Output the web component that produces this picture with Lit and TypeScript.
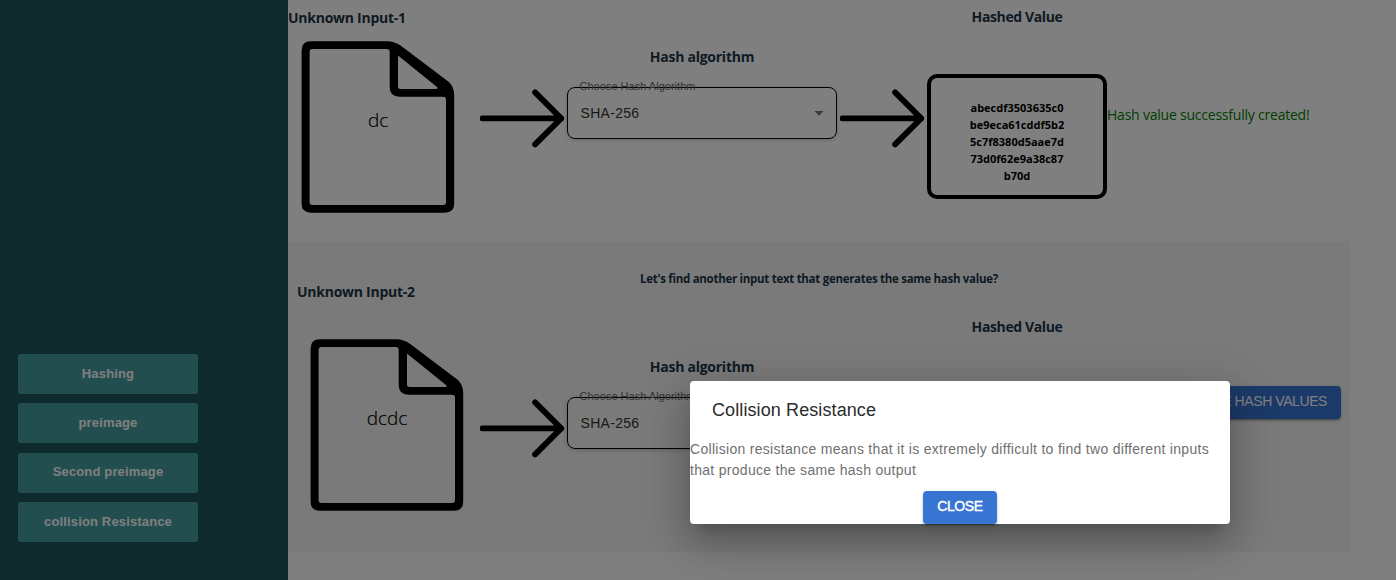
import { LitElement, html, css } from "lit";
import { customElement, property } from "lit/decorators.js";

@customElement("input-file")
class InputFile extends LitElement {
  @property() text = "";
  static styles = css`
    :host { display: grid; width: 154px; height: 173px; }
    svg, span { grid-area: 1 / 1; }
    span { place-self: center; padding-bottom: 15px; font: 300 19px/24px "Open Sans", sans-serif; letter-spacing: -.1px; color: #000; -webkit-text-stroke: .2px #000; }
  `;
  render() {
    return html`<svg width="154" height="173" viewBox="-.4 0 154 173">
        <path fill-rule="evenodd" d="M9 .2H86Q93 .2 99.500 4.700L147.200 40.700Q152.800 45.500 152.800 54V162.500Q152.800 171.700 143.500 171.700H9.500Q.2 171.700 .2 162.500V9.500Q.2 .2 9.500 .2Z
          M11 8Q8.200 8 8.200 11V161Q8.200 164 11 164H141.800Q144.600 164 144.600 161V58.700Q144.600 55.700 141.600 55.700H98Q88.300 55.700 88.300 46V11Q88.300 8 85.300 8Z
          M96.600 14.500L136.200 46.600Q136.500 48 135 48H99.200Q96.600 48 96.600 45.500Z" />
      </svg><span>${this.text}</span>`;
  }
}

@customElement("flow-arrow")
class FlowArrow extends LitElement {
  static styles = css`:host { display: block; height: 60px; } svg { display: block; }`;
  render() {
    return html`<svg width="86" height="60" viewBox="0 0 86 60" fill="none" stroke="#000" stroke-width="5.8" stroke-linecap="round" stroke-linejoin="round">
      <path d="M2.500 30.400H81.200M55.100 4.400L81.200 30.400L55.100 56.400" />
    </svg>`;
  }
}

@customElement("hash-select")
class HashSelect extends LitElement {
  static styles = css`
    :host { display: flex; align-items: center; box-sizing: border-box; position: relative; width: 270px; height: 52px;
      border: 1.5px solid #000; border-radius: 8px; padding: 0 12px 0 12.500px;
      box-shadow: 0 1px 4px rgba(0,0,0,.2); font-family: "Liberation Sans", Arial, sans-serif; }
    .label { position: absolute; left: 11.500px; top: -9px; font-size: 11px; line-height: 14px; letter-spacing: .02px; color: #666; white-space: nowrap; }
    .value { flex: 1; font-size: 14px; letter-spacing: .3px; color: #333; }
  `;
  render() {
    return html`<span class="label">Choose Hash Algorithm</span><span class="value">SHA-256</span>
      <svg width="10" height="5" viewBox="0 0 10 5"><path d="M.5 0H9.500L5 4.700Z" fill="#757575" /></svg>`;
  }
}

@customElement("app-root")
class AppRoot extends LitElement {
  static styles = css`
    :host { display: block; position: relative; height: 580px; overflow: hidden; background: #fff;
      font-family: "Open Sans", "Noto Sans", sans-serif; }
    .page { display: flex; height: 580px; }
    .side { box-sizing: border-box; width: 288px; padding: 354px 0 0 18px; background: #1c555a; display: flex; flex-direction: column; gap: 9.450px; }
    .side button { width: 180px; height: 40px; padding: 0 0 2px; border: 0; border-radius: 3px; background: #469c9e; color: #fff;
      font: bold 13px "Liberation Sans", Arial, sans-serif; letter-spacing: .15px; }
    main { flex: 1; }
    .row { display: grid; grid-template-columns: 192px 87px 270px 90px 180px 1fr; }
    .first { height: 241px; }
    .second { width: 1062px; height: 311px; background: #f4f4f4; }
    h3 { margin: 0; font-size: 14px; line-height: 20px; font-weight: 700; letter-spacing: -.26px; color: #213547; white-space: nowrap; }
    .hashed h3 { letter-spacing: -.38px; }
    .prompt { height: 43px; padding-top: 28px; box-sizing: border-box; text-align: center; font-size: 11.500px; letter-spacing: -.29px; }
    .center { text-align: center; }
    .first .input { padding-top: 8px; }
    .first input-file { margin: 13px 0 0 13px; }
    .second .input { padding-left: 9px; margin-top: -2px; }
    .second input-file { margin: 37px 0 0 13px; }
    .first flow-arrow { margin-top: 88px; }
    .second flow-arrow { margin-top: 114px; }
    .arrow2 { margin-left: 3px; }
    .first .algo { padding-top: 47px; }
    .second .algo { padding-top: 73px; }
    hash-select { margin-top: 20px; text-align: left; }
    .first .hashed { padding-top: 7px; }
    .second .hashed { padding-top: 33px; }
    .box { box-sizing: border-box; height: 125px; margin-top: 47.400px; border: 4px solid #000; border-radius: 10px; padding-top: 21px;
      font-size: 11px; line-height: 17px; font-weight: 700; color: #000; }
    .ok { padding-top: 105px; font-size: 14px; line-height: 20px; letter-spacing: -.22px; color: #008000; white-space: nowrap; }
    .action { display: flex; justify-content: flex-end; padding: 102px 9px 0 0; }
    .blue { box-sizing: border-box; height: 33px; border: 0; border-radius: 4px; padding: 0 14px 3px; background: #3874d2; color: #fff;
      font: 14px "Liberation Sans", Arial, sans-serif; letter-spacing: -.42px; white-space: nowrap;
      box-shadow: 0 3px 1px -2px rgba(0,0,0,.2), 0 2px 2px rgba(0,0,0,.14), 0 1px 5px rgba(0,0,0,.12); }
    .backdrop { position: absolute; inset: 0; background: rgba(0,0,0,.5); }
    .dialog { position: absolute; left: 690px; top: 381px; width: 540px; height: 143px; border-radius: 4px; background: #fff;
      font-family: "Liberation Sans", Arial, sans-serif; display: flex; flex-direction: column;
      box-shadow: 0 11px 15px -7px rgba(0,0,0,.2), 0 24px 38px 3px rgba(0,0,0,.14), 0 9px 46px 8px rgba(0,0,0,.12); }
    .dialog h2 { margin: 0; padding: 15px 22px; font-size: 18px; line-height: 28px; font-weight: 400; color: #2b2b2b; letter-spacing: .1px; }
    .dialog p { margin: 0; height: 52px; font-size: 14px; line-height: 21px; letter-spacing: .295px; color: #707070; white-space: nowrap; }
    .dialog .blue { align-self: center; width: 74px; -webkit-text-stroke: .4px #fff; }
  `;
  render() {
    const hash = html`abecdf3503635c0<br />be9eca61cddf5b2<br />5c7f8380d5aae7d<br />73d0f62e9a38c87<br />b70d`;
    return html`
      <div class="page">
        <nav class="side">
          ${["Hashing", "preimage", "Second preimage", "collision Resistance"].map((t) => html`<button>${t}</button>`)}
        </nav>
        <main>
          <section class="first row">
            <div class="input"><h3>Unknown Input-1</h3><input-file text="dc"></input-file></div>
            <flow-arrow></flow-arrow>
            <div class="algo center"><h3>Hash algorithm</h3><hash-select></hash-select></div>
            <flow-arrow class="arrow2"></flow-arrow>
            <div class="hashed center"><h3>Hashed Value</h3><div class="box">${hash}</div></div>
            <div class="ok">Hash value successfully created!</div>
          </section>
          <section class="second">
            <h3 class="prompt">Let's find another input text that generates the same hash value?</h3>
            <div class="row">
              <div class="input"><h3>Unknown Input-2</h3><input-file text="dcdc"></input-file></div>
              <flow-arrow></flow-arrow>
              <div class="algo center"><h3>Hash algorithm</h3><hash-select></hash-select></div>
              <flow-arrow class="arrow2"></flow-arrow>
              <div class="hashed center"><h3>Hashed Value</h3><div class="box"></div></div>
              <div class="action"><button class="blue">COMPARE HASH VALUES</button></div>
            </div>
          </section>
        </main>
      </div>
      <div class="backdrop"></div>
      <div class="dialog">
        <h2>Collision Resistance</h2>
        <p>Collision resistance means that it is extremely difficult to find two different inputs<br />that produce the same hash output</p>
        <button class="blue">CLOSE</button>
      </div>`;
  }
}
